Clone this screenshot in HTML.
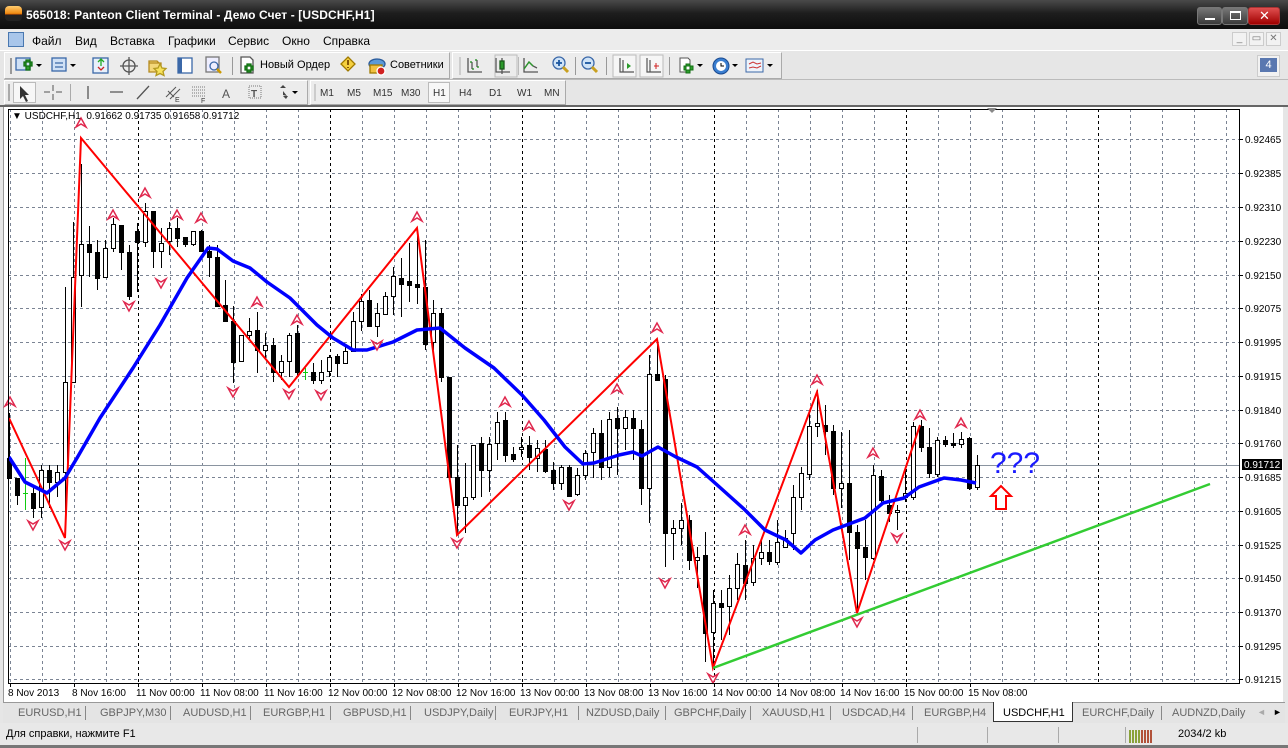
<!DOCTYPE html>
<html><head><meta charset="utf-8">
<style>
*{margin:0;padding:0;box-sizing:border-box}
body{width:1288px;height:748px;overflow:hidden;background:#e6e6e6;font-family:"Liberation Sans","DejaVu Sans",sans-serif;position:relative}
.abs{position:absolute}
#title{left:0;top:0;width:1288px;height:29px;background:linear-gradient(#4a4a4a,#1e1e1e 45%,#0e0e0e);}
#title .t{left:26px;top:8px;color:#fff;font-weight:bold;font-size:12px;letter-spacing:0.1px}
.wb{top:7px;height:18px;border:1px solid #777;border-radius:3px;background:linear-gradient(#777,#3a3a3a)}
#menu{left:0;top:29px;width:1288px;height:22px;background:#ececec;border-bottom:1px solid #fff}
#menu span{position:absolute;top:5px;font-size:12px;color:#000}
.tb{background:#ececec;border:1px solid #fff;border-right-color:#aaa;border-bottom-color:#aaa}
.ico{position:absolute;}
.tt{position:absolute;font-size:11px;color:#000}
.tf{position:absolute;top:88px;font-size:10px;color:#333}
.press{position:absolute;background:#f7f7f7;border:1px solid #bbb;}
#tabs span{position:absolute;top:707px;font-size:11px;color:#666}
.sep{position:absolute;width:1px;background:#888}
</style></head><body>
<div id="title" class="abs">
 <div class="abs" style="left:5px;top:6px;width:17px;height:15px;border-radius:4px;background:linear-gradient(#ffcc70,#f08a10 50%,#b34a00 55%,#222 60%)"></div>
 <div class="abs t">565018: Panteon Client Terminal - Демо Счет - [USDCHF,H1]</div>
 <div class="abs wb" style="left:1197px;width:25px"><div class="abs" style="left:7px;top:10px;width:10px;height:2px;background:#fff"></div></div>
 <div class="abs wb" style="left:1222px;width:26px"><div class="abs" style="left:7px;top:3px;width:11px;height:9px;border:1px solid #fff;border-top-width:2px"></div></div>
 <div class="abs wb" style="left:1248px;width:32px;background:linear-gradient(#e05050,#a00000);border-color:#a33"><div class="abs" style="left:10px;top:0px;color:#fff;font-size:13px;font-weight:bold">✕</div></div>
</div>
<div id="menu" class="abs">
 <div class="abs" style="left:8px;top:3px;width:16px;height:15px;background:#a9c6ea;border:1px solid #4a78b0"></div>
 <span style="left:32px">Файл</span><span style="left:75px">Вид</span><span style="left:110px">Вставка</span><span style="left:168px">Графики</span><span style="left:228px">Сервис</span><span style="left:282px">Окно</span><span style="left:323px">Справка</span>
 <div class="abs" style="left:1232px;top:3px;width:15px;height:14px;border:1px solid #ccc;background:#f2f2f2;font-size:10px;text-align:center;color:#777">_</div>
 <div class="abs" style="left:1249px;top:3px;width:15px;height:14px;border:1px solid #ccc;background:#f2f2f2;font-size:10px;text-align:center;color:#777">▭</div>
 <div class="abs" style="left:1266px;top:3px;width:15px;height:14px;border:1px solid #ccc;background:#f2f2f2;font-size:10px;text-align:center;color:#777">✕</div>
</div>
<!-- toolbar 1 -->
<div class="abs tb" style="left:4px;top:52px;width:446px;height:27px"></div>
<div class="abs tb" style="left:452px;top:52px;width:330px;height:27px"></div>
<div class="abs" style="left:4px;top:79px;width:1284px;height:1px;background:#bbb"></div>
<svg class="abs" style="left:0;top:52px" width="800" height="28">
 <g fill="none" stroke-width="1.3">
  <rect x="16" y="6" width="14" height="12" fill="#cfe0f5" stroke="#3b68a8"/><path d="M24 10h8v4h-8zM26 8v10h4V8z" fill="#2ca02c" stroke="#137013"/><path d="M36 12l3 3 3-3z" fill="#000"/>
  <rect x="52" y="6" width="14" height="13" fill="#cfe0f5" stroke="#3b68a8"/><path d="M55 11h8M55 15h8" stroke="#3b68a8"/><path d="M70 12l3 3 3-3z" fill="#000"/>
  <rect x="93" y="6" width="15" height="15" fill="#e8f0fa" stroke="#3b68a8"/><path d="M98 10l3-3 3 3M101 8v6" stroke="#2a2"/><path d="M98 15l3 3 3-3" stroke="#c22"/>
  <circle cx="129" cy="14" r="6" stroke="#555"/><path d="M129 5v18M120 14h18" stroke="#555"/>
  <path d="M149 9h8l2 2h-10z M149 11h12v9h-12z" fill="#f3d77a" stroke="#b48a20"/><path d="M160 12l2 4 4 .5-3 3 1 4-4-2-4 2 1-4-3-3 4-.5z" fill="#f7e25a" stroke="#b49a20"/>
  <rect x="178" y="6" width="14" height="15" fill="#fff" stroke="#3b68a8"/><rect x="178" y="6" width="4" height="15" fill="#3b68a8"/>
  <rect x="206" y="5" width="13" height="15" fill="#eef" stroke="#777"/><circle cx="214" cy="14" r="4" stroke="#3b68a8"/><path d="M217 17l4 4" stroke="#c90" stroke-width="2.5"/>
  <path d="M241 5h9l3 3v13h-12z" fill="#fff" stroke="#555"/><path d="M245 14h8v4h-8zM247 12v8h4v-8z" fill="#2ca02c" stroke="#137013"/>
  <path d="M348 5l7 7-7 7-7-7z" fill="#f5d040" stroke="#a07a00"/><path d="M348 8v5M348 15v1" stroke="#7a4a00" stroke-width="1.8"/>
  <ellipse cx="377" cy="12" rx="8" ry="5" fill="#5b9ad8" stroke="#2a5a9a"/><rect x="370" y="13" width="12" height="8" fill="#f0c040" stroke="#a07a00"/><circle cx="381" cy="19" r="4" fill="#d02020" stroke="#fff"/>
  <path d="M468 6v14h14M472 10v7M477 8v7" stroke="#555"/><path d="M472 10h-2M472 17h2M477 8h-2M477 15h2" stroke="#1a8a1a"/>
  <path d="M496 6v14h14M502 6v16" stroke="#555"/><rect x="500" y="9" width="4" height="8" fill="#2a9a2a" stroke="#1a5a1a"/>
  <path d="M524 6v14h14M524 17l5-7 4 4 4 2" stroke="#555"/><path d="M524 17l5-7 4 4" stroke="#2a9a2a"/>
  <circle cx="559" cy="11" r="6" fill="#cfe3f7" stroke="#3b68a8"/><path d="M556 11h6M559 8v6" stroke="#1a55a0" stroke-width="1.8"/><path d="M563 15l5 5" stroke="#c9a020" stroke-width="3"/>
  <circle cx="588" cy="11" r="6" fill="#cfe3f7" stroke="#3b68a8"/><path d="M585 11h6" stroke="#1a55a0" stroke-width="1.8"/><path d="M592 15l5 5" stroke="#c9a020" stroke-width="3"/>
 </g>
 <rect x="495" y="3" width="22" height="22" fill="none" stroke="#bbb"/>
 <rect x="613" y="3" width="23" height="22" fill="#f6f6f6" stroke="#bbb"/><rect x="640" y="3" width="23" height="22" fill="#f6f6f6" stroke="#bbb"/>
 <g fill="none" stroke="#555" stroke-width="1.2"><path d="M620 6v14h14M623 8v12"/><path d="M647 6v14h14M650 8v12"/></g>
 <path d="M627 11l4 3-4 3z" fill="#2a9a2a"/><path d="M654 14h5M656 11v6" stroke="#d02020"/>
 <path d="M680 6h8l2 2v12h-10z" fill="#fff" stroke="#555"/><path d="M684 14h9v4h-9zM686 12v9h4v-9z" fill="#2ca02c" stroke="#137013"/><path d="M697 12l3 3 3-3z"/>
 <circle cx="721" cy="14" r="8" fill="#3a7ed0" stroke="#1a4a90"/><circle cx="721" cy="14" r="5" fill="#fff"/><path d="M721 11v3h3" stroke="#000" fill="none"/><path d="M732 12l3 3 3-3z"/>
 <rect x="746" y="7" width="17" height="13" fill="#eef3fa" stroke="#3b68a8"/><path d="M749 12l4-2 4 2 4-1M749 16l4-1 4 1 4-2" stroke="#c33" fill="none"/><path d="M767 12l3 3 3-3z"/>
 <g fill="#999"><rect x="10" y="6" width="2" height="16"/><rect x="232" y="5" width="1" height="18"/><rect x="459" y="5" width="2" height="18" fill="#ccc"/><rect x="518" y="5" width="1" height="18" fill="#bbb"/><rect x="575" y="5" width="1" height="18"/><rect x="606" y="5" width="1" height="18"/><rect x="669" y="5" width="1" height="18"/></g>
</svg>
<div class="tt" style="left:260px;top:59px">Новый Ордер</div>
<div class="tt" style="left:390px;top:59px">Советники</div>
<div class="abs" style="left:1257px;top:55px;width:23px;height:22px;background:#f2f2f2;border:1px solid #ccc"><div class="abs" style="left:2px;top:2px;width:17px;height:14px;background:#5a78b0;color:#fff;font-size:11px;text-align:center;line-height:14px">4</div></div>
<!-- toolbar 2 -->
<div class="abs tb" style="left:4px;top:80px;width:304px;height:25px"></div>
<div class="abs tb" style="left:310px;top:80px;width:256px;height:25px"></div>
<div class="press" style="left:13px;top:82px;width:23px;height:21px"></div>
<div class="press" style="left:428px;top:82px;width:22px;height:21px"></div>
<svg class="abs" style="left:0;top:80px" width="320" height="25">
 <path d="M20 6v13l3-3 3 6 2-1-3-6h4z" fill="#333"/>
 <path d="M53 5v6M53 14v6M44 12h6M56 12h6" stroke="#555" fill="none"/>
 <rect x="70" y="4" width="1" height="17" fill="#aaa"/>
 <path d="M88 6v13M110 12h13M137 19l12-13" stroke="#555" stroke-width="1.3" fill="none"/>
 <path d="M166 17l10-10M170 19l10-10M168 11l6 6" stroke="#555" fill="none"/><text x="175" y="22" font-size="7" fill="#333">E</text>
 <path d="M192 7h14M192 10h14M192 13h14M192 16h14" stroke="#777" stroke-dasharray="1 1"/><text x="201" y="23" font-size="7" fill="#333">F</text>
 <text x="222" y="18" font-size="12" fill="#555">A</text>
 <rect x="249" y="6" width="12" height="12" fill="none" stroke="#777" stroke-dasharray="1 1"/><text x="251" y="17" font-size="10" font-weight="bold" fill="#555">T</text>
 <path d="M280 8l3-3 3 3zM283 11l4 5-4-1zM283 16l3 3 2-3z" fill="#444"/><path d="M292 11l3 3 3-3z" fill="#000"/>
 <rect x="8" y="4" width="2" height="17" fill="#aaa"/><rect x="314" y="4" width="2" height="17" fill="#ccc"/>
</svg>
<div class="tf" style="left:320px">M1</div><div class="tf" style="left:347px">M5</div><div class="tf" style="left:373px">M15</div><div class="tf" style="left:401px">M30</div><div class="tf" style="left:433px">H1</div><div class="tf" style="left:459px">H4</div><div class="tf" style="left:489px">D1</div><div class="tf" style="left:517px">W1</div><div class="tf" style="left:544px">MN</div>
<!-- chart area -->
<div class="abs" style="left:0;top:105px;width:1288px;height:2px;background:#666"></div>
<div class="abs" style="left:3px;top:107px;width:1280px;height:595px;background:#fff;border-left:1px solid #999"></div>
<svg id="ch" class="abs" style="left:0;top:0" width="1288" height="702"></svg>
<div class="abs" style="left:12px;top:111px;font-size:10px;color:#000">▼ USDCHF,H1&nbsp; 0.91662 0.91735 0.91658 0.91712</div>
<!-- tabs -->
<div class="abs" style="left:3px;top:702px;width:1282px;height:21px;background:#e4e4e4;border-top:1px solid #999"></div>
<div class="abs" style="left:993px;top:702px;width:80px;height:20px;background:#fff;border:1px solid #333;border-top:none"></div>
<div id="tabs">
<span style="left:18px">EURUSD,H1</span><span style="left:100px">GBPJPY,M30</span><span style="left:183px">AUDUSD,H1</span><span style="left:263px">EURGBP,H1</span><span style="left:343px">GBPUSD,H1</span><span style="left:424px">USDJPY,Daily</span><span style="left:509px">EURJPY,H1</span><span style="left:586px">NZDUSD,Daily</span><span style="left:674px">GBPCHF,Daily</span><span style="left:762px">XAUUSD,H1</span><span style="left:842px">USDCAD,H4</span><span style="left:924px">EURGBP,H4</span><span style="left:1003px;color:#000">USDCHF,H1</span><span style="left:1082px">EURCHF,Daily</span><span style="left:1172px">AUDNZD,Daily</span>
<span style="left:1257px;color:#aaa;font-size:9px">◄</span><span style="left:1273px;color:#000;font-size:9px">►</span>
</div>
<div class="sep" style="left:85px;top:706px;height:14px"></div><div class="sep" style="left:170px;top:706px;height:14px"></div><div class="sep" style="left:250px;top:706px;height:14px"></div><div class="sep" style="left:330px;top:706px;height:14px"></div><div class="sep" style="left:410px;top:706px;height:14px"></div><div class="sep" style="left:495px;top:706px;height:14px"></div><div class="sep" style="left:578px;top:706px;height:14px"></div><div class="sep" style="left:665px;top:706px;height:14px"></div><div class="sep" style="left:750px;top:706px;height:14px"></div><div class="sep" style="left:830px;top:706px;height:14px"></div><div class="sep" style="left:912px;top:706px;height:14px"></div><div class="sep" style="left:1161px;top:706px;height:14px"></div>
<!-- status -->
<div class="abs" style="left:0;top:723px;width:1288px;height:22px;background:#e8e8e8"></div>
<div class="abs" style="left:6px;top:728px;font-size:11px">Для справки, нажмите F1</div>
<div class="sep" style="left:917px;top:727px;height:16px;background:#aaa"></div><div class="sep" style="left:987px;top:727px;height:16px;background:#aaa"></div><div class="sep" style="left:1058px;top:727px;height:16px;background:#aaa"></div><div class="sep" style="left:1125px;top:727px;height:16px;background:#aaa"></div>
<svg class="abs" style="left:1129px;top:727px" width="26" height="16"><g stroke-width="1.5"><path d="M1 16v-13M4 16v-13M7 16v-13M10 16v-13" stroke="#6a8a00"/><path d="M13 16v-13M16 16v-13M19 16v-13M22 16v-13" stroke="#a02000"/></g></svg>
<div class="abs" style="left:1178px;top:728px;font-size:11px">2034/2 kb</div>
<div class="abs" style="left:0;top:745px;width:1288px;height:3px;background:#777"></div>
<script>
const D=[[458,478,413,478],[478,495,478,505],[493,493,458,510],[493,508,485,518],[507,470,465,518],[470,482,465,508],[482,472,465,497],[472,382,287,513],[382,277,222,382],[275,244,164,307],[244,252,226,277],[252,278,240,290],[277,248,240,277],[248,224,218,252],[225,252,225,270],[252,296,245,300],[231,242,223,292],[242,211,203,247],[211,251,211,268],[251,243,228,268],[241,228,222,255],[228,238,218,247],[237,244,238,247],[244,231,231,246],[231,251,230,251],[251,257,245,277],[257,306,245,307],[305,321,280,321],[321,362,306,383],[361,335,335,362],[335,331,318,341],[330,350,312,373],[350,345,333,360],[345,372,338,382],[372,361,355,380],[361,335,333,377],[333,372,325,377],[372,372,368,380],[372,380,363,384],[380,372,360,384],[371,357,355,377],[356,363,354,377],[363,351,346,363],[351,321,312,352],[321,301,294,331],[300,326,290,326],[326,313,303,337],[314,296,292,315],[296,276,267,315],[278,284,258,317],[281,285,243,302],[284,287,236,304],[287,344,240,350],[342,313,300,350],[313,377,308,382],[377,477,377,482],[477,505,445,535],[505,497,463,533],[497,445,445,500],[443,470,437,497],[470,444,437,492],[443,422,412,460],[420,455,412,462],[454,459,447,462],[449,447,437,457],[445,457,436,470],[458,448,440,472],[449,471,440,473],[470,483,462,490],[483,467,465,490],[467,496,465,497],[494,475,468,496],[475,453,450,480],[452,433,428,478],[433,467,420,480],[467,419,412,477],[418,428,407,475],[428,417,410,450],[418,428,410,460],[429,488,420,505],[488,374,355,523],[374,380,345,380],[379,533,375,567],[533,528,520,560],[528,520,503,545],[520,560,515,570],[560,557,547,588],[555,633,532,662],[632,603,590,668],[603,607,590,640],[606,588,575,635],[588,564,553,600],[565,583,540,600],[582,558,545,586],[558,552,540,565],[552,561,540,565],[562,542,520,565],[547,538,530,545],[533,497,485,550],[497,473,467,510],[474,426,412,480],[426,423,390,437],[425,431,405,455],[431,488,425,495],[488,483,432,508],[483,532,430,560],[532,548,525,612],[547,557,520,580],[558,475,465,560],[476,500,470,505],[505,513,495,522],[512,510,505,530],[497,493,470,502],[497,426,422,500],[426,447,420,452],[447,473,428,478],[474,440,437,477],[440,444,436,447],[443,445,433,448],[444,439,432,448],[438,488,437,490],[487,465,455,490]];
const blue=[[9,457],[25,482],[47,493],[65,478],[77,458],[100,418],[133,368],[160,325],[187,278],[208,248],[217,249],[233,261],[250,268],[267,282],[290,298],[317,325],[333,338],[353,350],[367,350],[393,342],[417,330],[440,328],[465,348],[494,368],[522,395],[544,420],[565,447],[583,464],[594,463],[619,455],[633,452],[642,456],[658,447],[676,457],[697,467],[715,483],[744,509],[765,530],[786,540],[801,553],[815,540],[833,530],[865,518],[883,503],[904,498],[919,487],[944,478],[961,480],[976,483]];
const zz=[[9,418],[65,538],[81,138],[289,387],[417,228],[457,535],[657,339],[713,668],[817,392],[857,613],[920,425]];
const up=[[10,402],[81,123],[113,215],[145,193],[177,215],[201,218],[257,302],[297,320],[417,217],[505,402],[529,426],[617,389],[657,328],[745,530],[817,380],[873,453],[920,415],[961,423]];
const dn=[[33,525],[65,545],[129,306],[161,283],[233,392],[289,394],[321,395],[377,345],[457,543],[569,505],[665,583],[713,678],[857,622],[897,538]];
const ly=[139,173,207,241,275,308,342,376,410,443,477,511,545,578,612,646,679];
const lv=["0.92465","0.92385","0.92310","0.92230","0.92150","0.92075","0.91995","0.91915","0.91840","0.91760","0.91685","0.91605","0.91525","0.91450","0.91370","0.91295","0.91215"];
const tl=["8 Nov 2013","8 Nov 16:00","11 Nov 00:00","11 Nov 08:00","11 Nov 16:00","12 Nov 00:00","12 Nov 08:00","12 Nov 16:00","13 Nov 00:00","13 Nov 08:00","13 Nov 16:00","14 Nov 00:00","14 Nov 08:00","14 Nov 16:00","15 Nov 00:00","15 Nov 08:00"];
let s='';
const L=8,R=1239,T=109,B=683;
for(let x=10;x<R;x+=32){const day=((x-138)%192===0);s+=`<line x1="${x+.5}" y1="${T}" x2="${x+.5}" y2="${B}" stroke="${day?'#000':'#7b8494'}" stroke-dasharray="3 3"/>`;}
ly.forEach((y,i)=>{s+=`<line x1="${L}" y1="${y+.5}" x2="${R}" y2="${y+.5}" stroke="#7b8494" stroke-dasharray="3 3"/><line x1="${R}" y1="${y+.5}" x2="${R+4}" y2="${y+.5}" stroke="#000"/><text x="${R+6}" y="${y+4}" font-size="10" fill="#000">${lv[i]}</text>`;});
s+=`<line x1="${L}" y1="465.5" x2="${R}" y2="465.5" stroke="#8a94a0"/>`;
tl.forEach((t,i)=>{const x=10+64*i;s+=`<line x1="${x+.5}" y1="${B}" x2="${x+.5}" y2="${B+4}" stroke="#000"/><text x="${x-2}" y="${B+13}" font-size="10" fill="#000">${t}</text>`;});
D.forEach((d,i)=>{const x=9+8*i;let [o,c,h,l]=d;const tp=Math.min(o,c),bt=Math.max(o,c);
 if(i==2||i==37){s+=`<line x1="${x+.5}" y1="${h}" x2="${x+.5}" y2="${l}" stroke="#1c1"/><line x1="${x-2}" y1="${o+.5}" x2="${x+3}" y2="${o+.5}" stroke="#1c1"/>`;return;}
 s+=`<line x1="${x+.5}" y1="${h}" x2="${x+.5}" y2="${l}" stroke="#000"/>`;
 s+=`<rect x="${x-1.5}" y="${tp+.5}" width="4" height="${Math.max(bt-tp,1)}" fill="${c<o?'#fff':'#000'}" stroke="#000"/>`;});
s+=`<polyline points="${zz.map(p=>p.join(',')).join(' ')}" fill="none" stroke="#f00" stroke-width="2"/>`;
s+=`<line x1="713" y1="668" x2="1210" y2="484" stroke="#3c3" stroke-width="2.5"/>`;
s+=`<polyline points="${blue.map(p=>p.join(',')).join(' ')}" fill="none" stroke="#00f" stroke-width="3.5" stroke-linejoin="round"/>`;
up.forEach(([x,y])=>{s+=`<path d="M${x} ${y-5}L${x-5} ${y+4}L${x} ${y+1}L${x+5} ${y+4}Z" fill="#fff" stroke="#e0284e" stroke-width="1.5"/>`;});
dn.forEach(([x,y])=>{s+=`<path d="M${x} ${y+5}L${x-5} ${y-4}L${x} ${y-1}L${x+5} ${y-4}Z" fill="#fff" stroke="#e0284e" stroke-width="1.5"/>`;});
s+=`<rect x="${L+.5}" y="${T+.5}" width="${R-L}" height="${B-T}" fill="none" stroke="#000"/>`;
s+=`<rect x="1242" y="459" width="40" height="11" fill="#000"/><text x="1244" y="468" font-size="10" fill="#fff">0.91712</text>`;
s+=`<text x="990" y="473" font-size="30" fill="#1a1aff">???</text>`;
s+=`<path d="M1001 486L991 496H996V509H1006V496H1011Z" fill="#fff" stroke="#f00" stroke-width="2"/>`;
s+=`<path d="M987 108l5 5 5-5z" fill="#888"/>`;
document.getElementById('ch').innerHTML=s;
</script>
</body></html>
